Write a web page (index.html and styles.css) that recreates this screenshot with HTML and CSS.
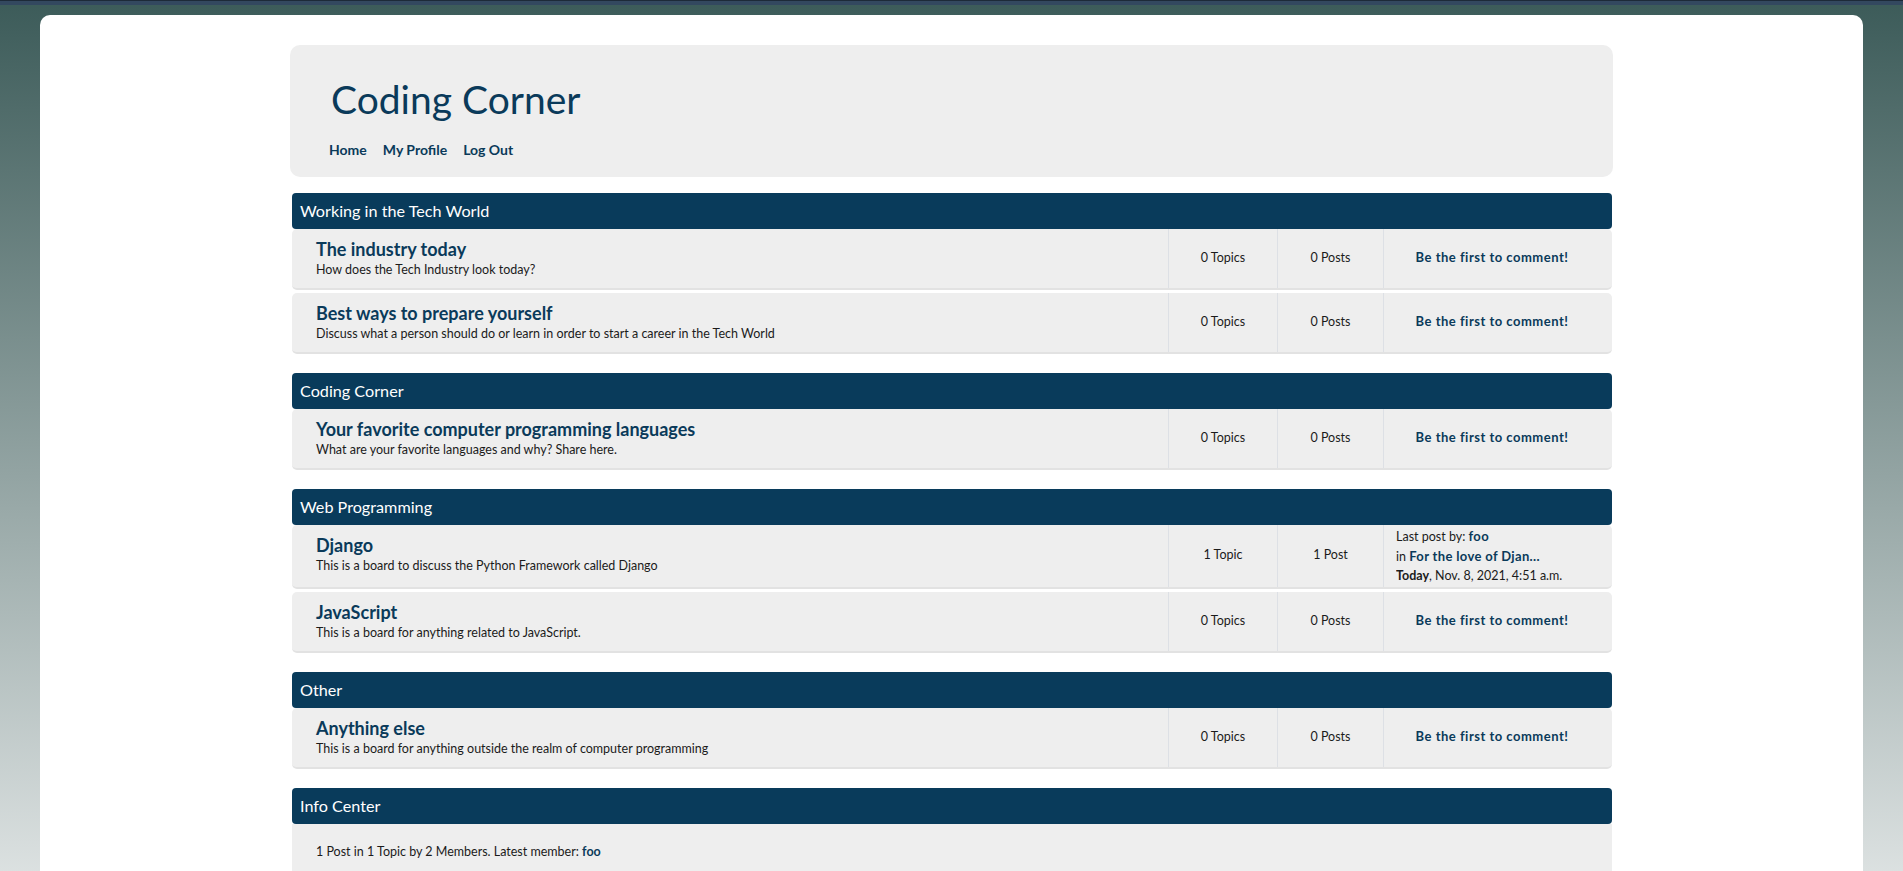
FILE: index.html
```html
<!DOCTYPE html>
<html lang="en">
<head>
<meta charset="utf-8">
<title>Coding Corner</title>
<link rel="stylesheet" href="styles.css">
</head>
<body>
<div class="topband"></div>
<div class="page">
  <div class="container">
    <header class="site-header">
      <h1 class="site-title">Coding Corner</h1>
      <nav class="nav">
        <a href="#">Home</a>
        <a href="#">My Profile</a>
        <a href="#">Log Out</a>
      </nav>
    </header>

    <section class="category">
      <div class="cat-bar">Working in the Tech World</div>
      <div class="board">
        <div class="b-main"><a class="b-title" href="#">The industry today</a><div class="b-desc">How does the Tech Industry look today?</div></div>
        <div class="b-count">0 Topics</div>
        <div class="b-count">0 Posts</div>
        <div class="b-last empty"><a href="#">Be the first to comment!</a></div>
      </div>
      <div class="board">
        <div class="b-main"><a class="b-title" href="#">Best ways to prepare yourself</a><div class="b-desc">Discuss what a person should do or learn in order to start a career in the Tech World</div></div>
        <div class="b-count">0 Topics</div>
        <div class="b-count">0 Posts</div>
        <div class="b-last empty"><a href="#">Be the first to comment!</a></div>
      </div>
    </section>

    <section class="category">
      <div class="cat-bar">Coding Corner</div>
      <div class="board">
        <div class="b-main"><a class="b-title" href="#">Your favorite computer programming languages</a><div class="b-desc">What are your favorite languages and why? Share here.</div></div>
        <div class="b-count">0 Topics</div>
        <div class="b-count">0 Posts</div>
        <div class="b-last empty"><a href="#">Be the first to comment!</a></div>
      </div>
    </section>

    <section class="category">
      <div class="cat-bar">Web Programming</div>
      <div class="board">
        <div class="b-main"><a class="b-title" href="#">Django</a><div class="b-desc">This is a board to discuss the Python Framework called Django</div></div>
        <div class="b-count">1 Topic</div>
        <div class="b-count">1 Post</div>
        <div class="b-last">
          <div class="lp-line">Last post by: <a href="#">foo</a></div>
          <div class="lp-line">in <a href="#">For the love of Djan...</a></div>
          <div class="lp-line"><b>Today</b>, Nov. 8, 2021, 4:51 a.m.</div>
        </div>
      </div>
      <div class="board">
        <div class="b-main"><a class="b-title" href="#">JavaScript</a><div class="b-desc">This is a board for anything related to JavaScript.</div></div>
        <div class="b-count">0 Topics</div>
        <div class="b-count">0 Posts</div>
        <div class="b-last empty"><a href="#">Be the first to comment!</a></div>
      </div>
    </section>

    <section class="category">
      <div class="cat-bar">Other</div>
      <div class="board">
        <div class="b-main"><a class="b-title" href="#">Anything else</a><div class="b-desc">This is a board for anything outside the realm of computer programming</div></div>
        <div class="b-count">0 Topics</div>
        <div class="b-count">0 Posts</div>
        <div class="b-last empty"><a href="#">Be the first to comment!</a></div>
      </div>
    </section>

    <section class="category">
      <div class="cat-bar">Info Center</div>
      <div class="info">1 Post in 1 Topic by 2 Members. Latest member: <a href="#">foo</a></div>
    </section>
  </div>
</div>
</body>
</html>
```

FILE: styles.css
```css
html, body {
  margin: 0;
  padding: 0;
}
body {
  min-height: 100vh;
  background: linear-gradient(to bottom, #3c5b59 0%, #f0f2f2 100%);
  font-family: Lato, "Liberation Sans", sans-serif;
  color: #1b1b1b;
}
.topband {
  height: 5px;
  background: #33485f;
  border-top: 1px solid #1d2a38;
  box-sizing: border-box;
}
.page {
  margin: 10px 40px 0;
  background: #ffffff;
  border-radius: 10px;
  padding: 30px 0 40px;
  min-height: 900px;
}
.container {
  width: 1323px;
  margin: 0 auto;
  display: flex;
  flex-direction: column;
  gap: 16px;
}
a {
  color: #0a3a5a;
  text-decoration: none;
  font-weight: 700;
}
.site-header {
  background: #eeeeee;
  border-radius: 10px;
  height: 132px;
  box-sizing: border-box;
  padding: 24px 39px 0;
}
.site-title {
  margin: 0 0 0 2px;
  font-size: 39px;
  font-weight: 400;
  color: #0a3a5a;
  line-height: 60px;
}
.nav {
  display: flex;
  gap: 16px;
  margin-top: 12px;
  font-size: 14px;
}
.category {
  margin: 0 1px 0 2px;
}
.cat-bar {
  background: #093b5b;
  color: #ffffff;
  font-size: 16.2px;
  height: 36px;
  line-height: 36px;
  padding: 0 8px;
  border-radius: 4px;
}
.board {
  display: grid;
  grid-template-columns: 876px 109px 106px 229px;
  background: #eeeeee;
  border-radius: 5px;
  min-height: 59px;
  border-bottom: 2px solid #e2e2e2;
  margin-bottom: 3px;
  font-size: 12.5px;
}
.b-main {
  padding: 9px 24px 0;
}
.b-title {
  display: block;
  font-size: 18px;
  line-height: 23px;
}
.b-desc {
  font-size: 12.5px;
  line-height: 18px;
  margin-top: 0;
}
.b-count {
  border-left: 1px solid #dde0e5;
  display: flex;
  align-items: center;
  justify-content: center;
  padding-bottom: 3px;
}
.b-last {
  border-left: 1px solid #dde0e5;
  padding: 1px 12px 1px;
  line-height: 20px;
  display: flex;
  flex-direction: column;
  justify-content: center;
}
.lp-line {
  height: 20px;
  overflow: hidden;
}
.b-last a {
  font-size: 13px;
  letter-spacing: 0.35px;
}
.b-last.empty {
  align-items: center;
  padding: 0 24px 3px 12px;
}
.b-last.empty a {
  letter-spacing: 0.5px;
}
.info {
  background: #eeeeee;
  padding: 19px 24px 40px;
  font-size: 12.5px;
  line-height: 18px;
  border-radius: 0 0 5px 5px;
}
```
